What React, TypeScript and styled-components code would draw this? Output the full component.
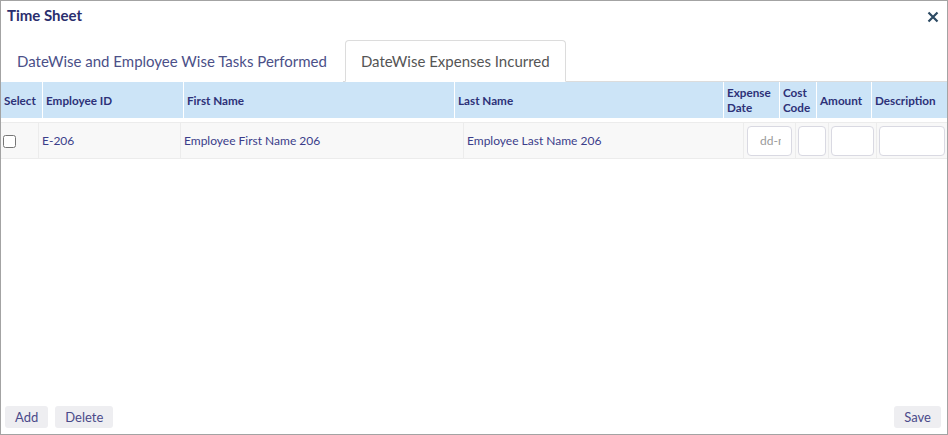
import React from "react";
import styled, { createGlobalStyle } from "styled-components";

const Global = createGlobalStyle`
  html, body { margin: 0; padding: 0; background: #fff; }
  body { font-family: Lato, "Noto Sans", sans-serif; }
  * { box-sizing: border-box; }
`;

const Dialog = styled.div`
  width: 948px;
  height: 435px;
  border: 1px solid #a3a3a3;
  display: flex;
  flex-direction: column;
  background: #fff;
`;

const TitleBar = styled.div`
  height: 27px;
  padding: 0 8px 0 6px;
  display: flex;
  align-items: center;
  justify-content: space-between;
`;

const Title = styled.div`
  font-size: 15px;
  font-weight: 700;
  color: #2a2e6e;
  padding-top: 1px;
`;

const CloseButton = styled.button`
  border: 0;
  background: none;
  padding: 0;
  margin-top: 5px;
  width: 12px;
  height: 12px;
  display: flex;
  cursor: pointer;
`;

const TabBar = styled.div`
  margin-top: 12px;
  height: 42px;
  display: flex;
  align-items: flex-end;
  border-bottom: 1px solid #dcdcdc;
`;

const Tab = styled.div<{ $active?: boolean }>`
  height: 42px;
  margin-bottom: -1px;
  padding: 0 15px;
  margin-right: 2px;
  display: flex;
  align-items: center;
  font-size: 15px;
  color: ${(p) => (p.$active ? "#555555" : "#4b5088")};
  background: #fff;
  border: 1px solid ${(p) => (p.$active ? "#dcdcdc" : "transparent")};
  border-bottom-color: ${(p) => (p.$active ? "#fff" : "transparent")};
  border-radius: 4px 4px 0 0;
`;

const HeaderRow = styled.div`
  display: grid;
  grid-template-columns: 41px 140px 270px 268px 55px 36px 54px 1fr;
  column-gap: 1px;
  background: #fff;
  height: 36px;
`;

const HeaderCell = styled.div`
  background: #cce4f7;
  display: flex;
  align-items: center;
  padding: 0 1px 0 3px;
  font-size: 11.7px;
  font-weight: 700;
  line-height: 15px;
  color: #2d3178;
`;

const DataRow = styled.div`
  margin-top: 4px;
  display: grid;
  grid-template-columns: 37px 142px 283px 280px 52px 33px 48px 1fr;
  height: 37px;
  background: #f8f8f8;
  border-top: 1px solid #ececec;
  border-bottom: 1px solid #ececec;
`;

const DataCell = styled.div<{ $first?: boolean; $pad?: number }>`
  display: flex;
  align-items: center;
  padding: 0 ${(p) => p.$pad ?? 3}px;
  border-left: ${(p) => (p.$first ? "0" : "1px solid #ececec")};
  font-size: 12px;
  color: #3b3d8a;
`;

const Check = styled.input`
  margin: 1px 0 0 2px;
  width: 13px;
  height: 13px;
`;

const TextBox = styled.input`
  width: 100%;
  height: 30px;
  border: 1px solid #d9d9e2;
  border-radius: 4px;
  background: #fff;
  font-family: Lato, "Noto Sans", sans-serif;
  font-size: 12px;
  color: #333;
  padding: 0 4px;
  outline: none;
  &::placeholder { color: #9a9a9a; }
`;

const DateBox = styled(TextBox)`
  padding: 0 10px 0 12px;
`;

const Body = styled.div`
  flex: 1;
`;

const Footer = styled.div`
  display: flex;
  align-items: center;
  padding: 0 6px 6px 4px;
  gap: 7px;
`;

const Spacer = styled.div`
  flex: 1;
`;

const Button = styled.button`
  height: 22px;
  padding: 0 10px;
  border: 0;
  border-radius: 3px;
  background: #eeeef1;
  color: #4a4a8a;
  font-family: Lato, "Noto Sans", sans-serif;
  font-size: 13px;
  cursor: pointer;
`;

const headers = ["Select", "Employee ID", "First Name", "Last Name", "Expense Date", "Cost Code", "Amount", "Description"];

export default function App() {
  return (
    <>
      <Global />
      <Dialog>
        <TitleBar>
          <Title>Time Sheet</Title>
          <CloseButton aria-label="close">
            <svg width="12" height="12" viewBox="0 0 12 12">
              <path d="M1.5 1.5 L10.5 10.5 M10.5 1.5 L1.5 10.5" stroke="#2c4a63" strokeWidth="2.2" strokeLinecap="butt" />
            </svg>
          </CloseButton>
        </TitleBar>
        <TabBar>
          <Tab>DateWise and Employee Wise Tasks Performed</Tab>
          <Tab $active>DateWise Expenses Incurred</Tab>
        </TabBar>
        <Body>
          <HeaderRow>
            {headers.map((h) => (
              <HeaderCell key={h}>{h}</HeaderCell>
            ))}
          </HeaderRow>
          <DataRow>
            <DataCell $first $pad={0}>
              <Check type="checkbox" />
            </DataCell>
            <DataCell>E-206</DataCell>
            <DataCell>Employee First Name 206</DataCell>
            <DataCell>Employee Last Name 206</DataCell>
            <DataCell>
              <DateBox placeholder="dd-mm-yyyy" />
            </DataCell>
            <DataCell $pad={2}>
              <TextBox />
            </DataCell>
            <DataCell $pad={2}>
              <TextBox />
            </DataCell>
            <DataCell $pad={2}>
              <TextBox />
            </DataCell>
          </DataRow>
        </Body>
        <Footer>
          <Button>Add</Button>
          <Button>Delete</Button>
          <Spacer />
          <Button>Save</Button>
        </Footer>
      </Dialog>
    </>
  );
}
